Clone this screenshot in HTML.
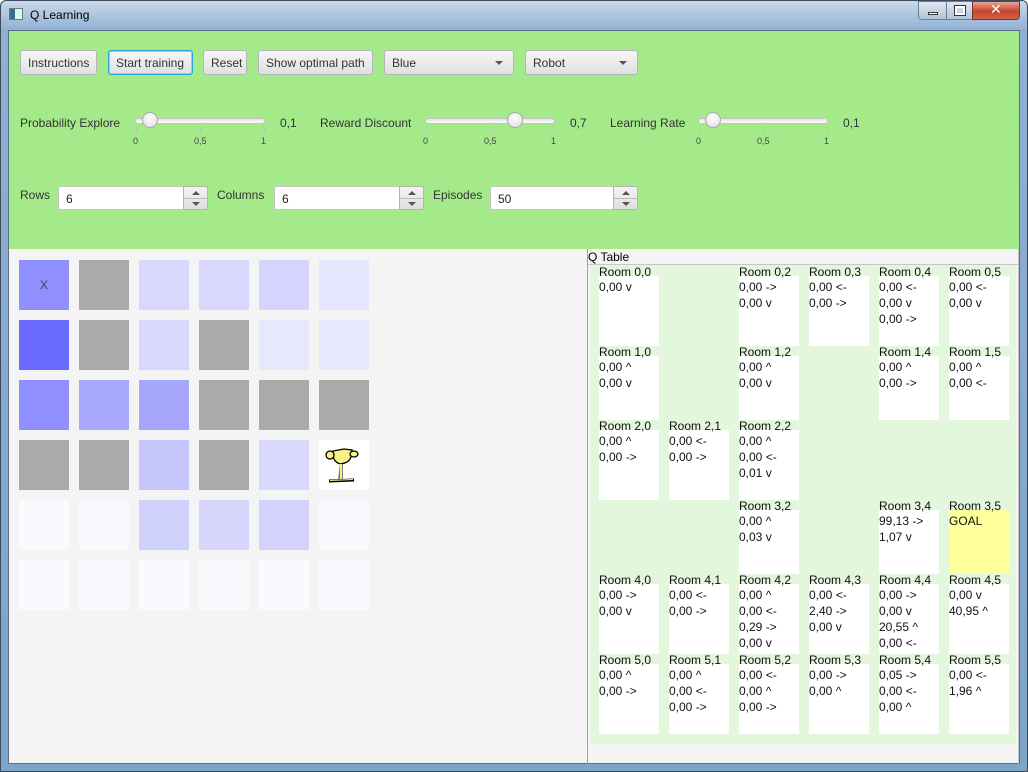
<!DOCTYPE html>
<html><head><meta charset="utf-8"><style>
*{margin:0;padding:0;box-sizing:border-box}
body{width:1028px;height:772px;overflow:hidden;background:#fff;font-family:"Liberation Sans",sans-serif;font-size:12px;color:#333;position:relative}
.a{position:absolute}
.frame{left:0;top:0;width:1028px;height:772px;background:linear-gradient(#c9d9ea,#8fb0d3 30px,#7ea4c8);border:1px solid #3b4a5c;border-radius:6px 6px 0 0}
.title{left:30px;top:8px;font-size:12px;color:#000}
.client{left:8px;top:30px;width:1012px;height:734px;background:#f4f4f4;border:1px solid #5d6f85}
.green{left:9px;top:31px;width:1010px;height:218px;background:#a5ea8a}
.btn{position:absolute;top:50px;height:25px;border:1px solid #b5b5b5;border-radius:3px;background:linear-gradient(#f6f6f6,#e0e0e0);font-size:12px;line-height:24px;color:#333;padding-left:7px;white-space:nowrap}
.btn.f{border:1px solid #2aa3d6;box-shadow:0 0 0 1px #8ad2f0 inset}
.arr{position:absolute;right:10px;top:10px;width:0;height:0;border-left:4px solid transparent;border-right:4px solid transparent;border-top:4px solid #555}
.lbl{position:absolute;font-size:12px;color:#333;white-space:nowrap}
.track{position:absolute;height:6px;border:1px solid #c3c3c3;border-radius:3px;background:linear-gradient(#e8e8e8,#fafafa)}
.thumb{position:absolute;width:16px;height:16px;border-radius:50%;border:1px solid #a9a9a9;background:radial-gradient(circle at 50% 35%,#fff,#dcdcdc)}
.tick{position:absolute;width:1px;height:4px;background:#bbb}
.tl{position:absolute;font-size:9px;color:#444}
.field{position:absolute;top:186px;height:24px;background:#fff;border:1px solid #c5c5c5;border-radius:2px;font-size:12px;line-height:24px;padding-left:7px;color:#222}
.sp{position:absolute;top:186px;width:25px;height:24px;border:1px solid #b5b5b5;background:linear-gradient(#f4f4f4,#dedede);border-radius:0 2px 2px 0}
.sp:after{content:"";position:absolute;left:0;right:0;top:11px;border-top:1px solid #bbb}
.up{position:absolute;left:8px;top:4px;border-left:4px solid transparent;border-right:4px solid transparent;border-bottom:4px solid #555}
.dn{position:absolute;left:8px;top:15px;border-left:4px solid transparent;border-right:4px solid transparent;border-top:4px solid #555}
.c{position:absolute;width:50px;height:50px}
.r{position:absolute;width:60px;font-size:12px;line-height:16px;color:#111;white-space:nowrap}
.r b{font-weight:normal;display:block;height:10px;line-height:12px;}
.r div{background:#fff;padding-top:3px;}
</style></head><body>
<div class="a frame"></div>
<div class="a" style="left:9px;top:8px;width:14px;height:12px;border:1px solid #777;background:linear-gradient(90deg,#3a6e8c 0 40%,#cfe 40%)"></div>
<div class="a title">Q Learning</div>
<div class="a" style="left:918px;top:1px;width:29px;height:19px;border:1px solid #6e7f93;border-radius:0 0 0 4px;background:linear-gradient(#dfe8f2,#b0c4da)"><div class="a" style="left:9px;top:10px;width:10px;height:3px;background:#fff;border:1px solid #333"></div></div>
<div class="a" style="left:946px;top:1px;width:27px;height:19px;border:1px solid #6e7f93;background:linear-gradient(#dfe8f2,#b0c4da)"><div class="a" style="left:8px;top:4px;width:10px;height:9px;border:2px solid #fff;outline:1px solid #333"></div></div>
<div class="a" style="left:972px;top:1px;width:48px;height:19px;border:1px solid #6e3a30;border-radius:0 0 4px 0;background:linear-gradient(#e8a595,#c7432c 55%,#d4624a)"><div class="a" style="left:17px;top:0px;color:#fff;font-weight:bold;font-size:14px;font-family:'DejaVu Sans',sans-serif">✕</div></div>
<div class="a client"></div>
<div class="a green"></div>

<div class="btn" style="left:20px;width:77px">Instructions</div>
<div class="btn f" style="left:108px;width:85px">Start training</div>
<div class="btn" style="left:203px;width:44px">Reset</div>
<div class="btn" style="left:258px;width:115px">Show optimal path</div>
<div class="btn" style="left:384px;width:130px">Blue<span class="arr"></span></div>
<div class="btn" style="left:525px;width:113px">Robot<span class="arr"></span></div>

<div class="lbl" style="left:20px;top:116px">Probability Explore</div>
<div class="track" style="left:135px;top:118px;width:130px"></div>
<div class="thumb" style="left:142px;top:112px"></div>
<div class="tick" style="left:136px;top:127px"></div><div class="tick" style="left:200px;top:127px"></div><div class="tick" style="left:264px;top:127px"></div>
<div class="tl" style="left:133px;top:136px">0</div><div class="tl" style="left:194px;top:136px">0,5</div><div class="tl" style="left:261px;top:136px">1</div>
<div class="lbl" style="left:280px;top:116px">0,1</div>

<div class="lbl" style="left:320px;top:116px">Reward Discount</div>
<div class="track" style="left:425px;top:118px;width:130px"></div>
<div class="thumb" style="left:507px;top:112px"></div>
<div class="tick" style="left:426px;top:127px"></div><div class="tick" style="left:490px;top:127px"></div><div class="tick" style="left:554px;top:127px"></div>
<div class="tl" style="left:423px;top:136px">0</div><div class="tl" style="left:484px;top:136px">0,5</div><div class="tl" style="left:551px;top:136px">1</div>
<div class="lbl" style="left:570px;top:116px">0,7</div>

<div class="lbl" style="left:610px;top:116px">Learning Rate</div>
<div class="track" style="left:698px;top:118px;width:130px"></div>
<div class="thumb" style="left:705px;top:112px"></div>
<div class="tick" style="left:699px;top:127px"></div><div class="tick" style="left:763px;top:127px"></div><div class="tick" style="left:827px;top:127px"></div>
<div class="tl" style="left:696px;top:136px">0</div><div class="tl" style="left:757px;top:136px">0,5</div><div class="tl" style="left:824px;top:136px">1</div>
<div class="lbl" style="left:843px;top:116px">0,1</div>

<div class="lbl" style="left:20px;top:188px">Rows</div>
<div class="field" style="left:58px;width:130px">6</div><div class="sp" style="left:183px"><i class="up"></i><i class="dn"></i></div>
<div class="lbl" style="left:217px;top:188px">Columns</div>
<div class="field" style="left:274px;width:130px">6</div><div class="sp" style="left:399px"><i class="up"></i><i class="dn"></i></div>
<div class="lbl" style="left:433px;top:188px">Episodes</div>
<div class="field" style="left:490px;width:128px">50</div><div class="sp" style="left:613px"><i class="up"></i><i class="dn"></i></div>

<!-- grid -->
<div class="c" style="left:19px;top:260px;background:#8f8fff;color:#444;text-align:center;line-height:50px;font-size:12px">X</div>
<div class="c" style="left:79px;top:260px;background:#aaa"></div>
<div class="c" style="left:139px;top:260px;background:#d8d8fe"></div>
<div class="c" style="left:199px;top:260px;background:#d8d8fe"></div>
<div class="c" style="left:259px;top:260px;background:#d4d4fd"></div>
<div class="c" style="left:319px;top:260px;background:#e6e6fe"></div>
<div class="c" style="left:19px;top:320px;background:#6b6bff"></div>
<div class="c" style="left:79px;top:320px;background:#aaa"></div>
<div class="c" style="left:139px;top:320px;background:#d8d8fd"></div>
<div class="c" style="left:199px;top:320px;background:#aaa"></div>
<div class="c" style="left:259px;top:320px;background:#e8e8fd"></div>
<div class="c" style="left:319px;top:320px;background:#e8e8fd"></div>
<div class="c" style="left:19px;top:380px;background:#8f8fff"></div>
<div class="c" style="left:79px;top:380px;background:#a8a8ff"></div>
<div class="c" style="left:139px;top:380px;background:#a6a6fd"></div>
<div class="c" style="left:199px;top:380px;background:#aaa"></div>
<div class="c" style="left:259px;top:380px;background:#aaa"></div>
<div class="c" style="left:319px;top:380px;background:#aaa"></div>
<div class="c" style="left:19px;top:440px;background:#aaa"></div>
<div class="c" style="left:79px;top:440px;background:#aaa"></div>
<div class="c" style="left:139px;top:440px;background:#c6c6fd"></div>
<div class="c" style="left:199px;top:440px;background:#aaa"></div>
<div class="c" style="left:259px;top:440px;background:#d9d9fd"></div>
<div class="c" style="left:319px;top:440px;background:#fff"><svg width="50" height="50" viewBox="0 0 50 50"><path d="M14 11 L25 9 L33 10 L32 17 Q30 23 21 24 Q15 22 14 16 Z" fill="#f8f088" stroke="#000" stroke-width="1.3"/><circle cx="11" cy="15" r="4" fill="#f8f088" stroke="#000" stroke-width="1.3"/><ellipse cx="35" cy="14" rx="4" ry="3" fill="#f8f088" stroke="#000" stroke-width="1.3"/><path d="M21 24 L20 39 M23 24 L23 39" stroke="#000" stroke-width="1" fill="none"/><rect x="20.5" y="24" width="2.5" height="15" fill="#f8f088"/><path d="M10 41 L35 40" stroke="#000" stroke-width="3"/><path d="M11 40.5 L34 39.5" stroke="#f8f088" stroke-width="1"/></svg></div>
<div class="c" style="left:19px;top:500px;background:#f9f9fe"></div>
<div class="c" style="left:79px;top:500px;background:#f9f9fe"></div>
<div class="c" style="left:139px;top:500px;background:#d0d0fd"></div>
<div class="c" style="left:199px;top:500px;background:#d6d6fd"></div>
<div class="c" style="left:259px;top:500px;background:#d2d2fd"></div>
<div class="c" style="left:319px;top:500px;background:#f9f9fe"></div>
<div class="c" style="left:19px;top:560px;background:#f9f9fe"></div>
<div class="c" style="left:79px;top:560px;background:#f9f9fe"></div>
<div class="c" style="left:139px;top:560px;background:#f9f9fe"></div>
<div class="c" style="left:199px;top:560px;background:#f9f9fe"></div>
<div class="c" style="left:259px;top:560px;background:#f9f9fe"></div>
<div class="c" style="left:319px;top:560px;background:#f9f9fe"></div>

<!-- right pane -->
<div class="a" style="left:587px;top:249px;width:1px;height:515px;background:#a0a0a0"></div>
<div class="a" style="left:1018px;top:249px;width:1px;height:515px;background:#c8c8c8"></div>
<div class="a" style="left:588px;top:249px;width:430px;height:16px;background:#f4f4f4;border-bottom:1px solid #c8c8c8;font-size:12px;line-height:17px;color:#000">Q Table</div>
<div class="a" style="left:590px;top:265px;width:426px;height:479px;background:#e3f7dc"></div>

<div class="r" style="left:599px;top:266px"><b>Room 0,0</b><div style="height:70px">0,00 v</div></div>
<div class="r" style="left:739px;top:266px"><b>Room 0,2</b><div style="height:70px">0,00 -&gt;<br>0,00 v</div></div>
<div class="r" style="left:809px;top:266px"><b>Room 0,3</b><div style="height:70px">0,00 &lt;-<br>0,00 -&gt;</div></div>
<div class="r" style="left:879px;top:266px"><b>Room 0,4</b><div style="height:70px">0,00 &lt;-<br>0,00 v<br>0,00 -&gt;</div></div>
<div class="r" style="left:949px;top:266px"><b>Room 0,5</b><div style="height:70px">0,00 &lt;-<br>0,00 v</div></div>

<div class="r" style="left:599px;top:346px"><b>Room 1,0</b><div style="height:64px">0,00 ^<br>0,00 v</div></div>
<div class="r" style="left:739px;top:346px"><b>Room 1,2</b><div style="height:64px">0,00 ^<br>0,00 v</div></div>
<div class="r" style="left:879px;top:346px"><b>Room 1,4</b><div style="height:64px">0,00 ^<br>0,00 -&gt;</div></div>
<div class="r" style="left:949px;top:346px"><b>Room 1,5</b><div style="height:64px">0,00 ^<br>0,00 &lt;-</div></div>

<div class="r" style="left:599px;top:420px"><b>Room 2,0</b><div style="height:70px">0,00 ^<br>0,00 -&gt;</div></div>
<div class="r" style="left:669px;top:420px"><b>Room 2,1</b><div style="height:70px">0,00 &lt;-<br>0,00 -&gt;</div></div>
<div class="r" style="left:739px;top:420px"><b>Room 2,2</b><div style="height:70px">0,00 ^<br>0,00 &lt;-<br>0,01 v</div></div>

<div class="r" style="left:739px;top:500px"><b>Room 3,2</b><div style="height:64px">0,00 ^<br>0,03 v</div></div>
<div class="r" style="left:879px;top:500px"><b>Room 3,4</b><div style="height:64px">99,13 -&gt;<br>1,07 v</div></div>
<div class="r" style="left:949px;top:500px"><b>Room 3,5</b><div style="height:64px;background:#ffff99">GOAL</div></div>

<div class="r" style="left:599px;top:574px"><b>Room 4,0</b><div style="height:70px">0,00 -&gt;<br>0,00 v</div></div>
<div class="r" style="left:669px;top:574px"><b>Room 4,1</b><div style="height:70px">0,00 &lt;-<br>0,00 -&gt;</div></div>
<div class="r" style="left:739px;top:574px"><b>Room 4,2</b><div style="height:70px">0,00 ^<br>0,00 &lt;-<br>0,29 -&gt;<br>0,00 v</div></div>
<div class="r" style="left:809px;top:574px"><b>Room 4,3</b><div style="height:70px">0,00 &lt;-<br>2,40 -&gt;<br>0,00 v</div></div>
<div class="r" style="left:879px;top:574px"><b>Room 4,4</b><div style="height:70px">0,00 -&gt;<br>0,00 v<br>20,55 ^<br>0,00 &lt;-</div></div>
<div class="r" style="left:949px;top:574px"><b>Room 4,5</b><div style="height:70px">0,00 v<br>40,95 ^</div></div>

<div class="r" style="left:599px;top:654px"><b>Room 5,0</b><div style="height:70px">0,00 ^<br>0,00 -&gt;</div></div>
<div class="r" style="left:669px;top:654px"><b>Room 5,1</b><div style="height:70px">0,00 ^<br>0,00 &lt;-<br>0,00 -&gt;</div></div>
<div class="r" style="left:739px;top:654px"><b>Room 5,2</b><div style="height:70px">0,00 &lt;-<br>0,00 ^<br>0,00 -&gt;</div></div>
<div class="r" style="left:809px;top:654px"><b>Room 5,3</b><div style="height:70px">0,00 -&gt;<br>0,00 ^</div></div>
<div class="r" style="left:879px;top:654px"><b>Room 5,4</b><div style="height:70px">0,05 -&gt;<br>0,00 &lt;-<br>0,00 ^</div></div>
<div class="r" style="left:949px;top:654px"><b>Room 5,5</b><div style="height:70px">0,00 &lt;-<br>1,96 ^</div></div>
</body></html>
